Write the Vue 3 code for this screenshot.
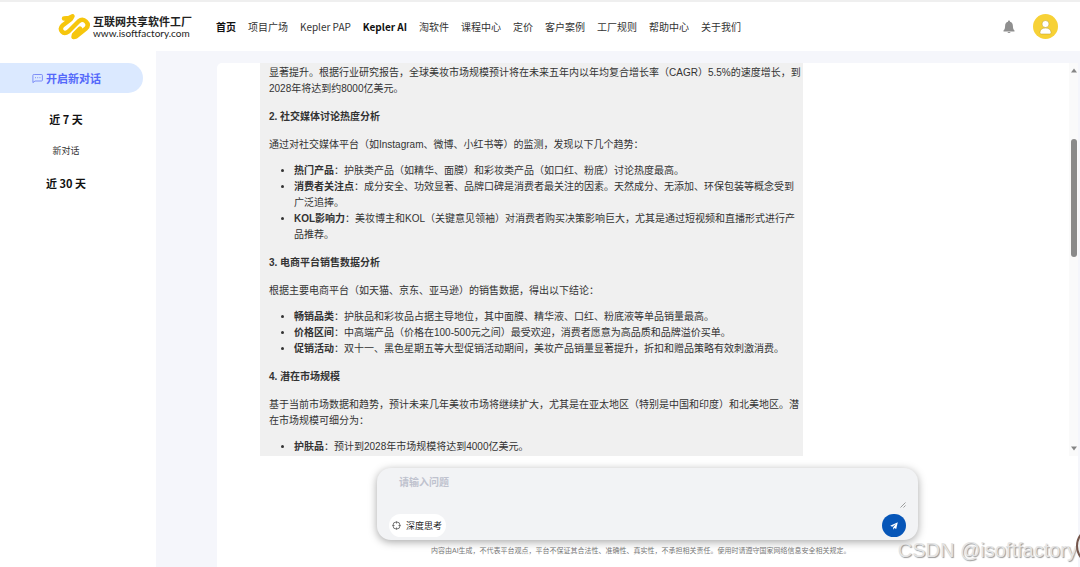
<script setup>
const nav = [
  { label: '首页', strong: true },
  { label: '项目广场' },
  { label: 'Kepler PAP' },
  { label: 'Kepler AI', strong: true },
  { label: '淘软件' },
  { label: '课程中心' },
  { label: '定价' },
  { label: '客户案例' },
  { label: '工厂规则' },
  { label: '帮助中心' },
  { label: '关于我们' },
]
const sections = [
  {
    title: '2. 社交媒体讨论热度分析',
    intro: '通过对社交媒体平台（如Instagram、微博、小红书等）的监测，发现以下几个趋势：',
    items: [
      ['热门产品', '护肤类产品（如精华、面膜）和彩妆类产品（如口红、粉底）讨论热度最高。'],
      ['消费者关注点', '成分安全、功效显著、品牌口碑是消费者最关注的因素。天然成分、无添加、环保包装等概念受到广泛追捧。'],
      ['KOL影响力', '美妆博主和KOL（关键意见领袖）对消费者购买决策影响巨大，尤其是通过短视频和直播形式进行产品推荐。'],
    ],
  },
  {
    title: '3. 电商平台销售数据分析',
    intro: '根据主要电商平台（如天猫、京东、亚马逊）的销售数据，得出以下结论：',
    items: [
      ['畅销品类', '护肤品和彩妆品占据主导地位，其中面膜、精华液、口红、粉底液等单品销量最高。'],
      ['价格区间', '中高端产品（价格在100-500元之间）最受欢迎，消费者愿意为高品质和品牌溢价买单。'],
      ['促销活动', '双十一、黑色星期五等大型促销活动期间，美妆产品销量显著提升，折扣和赠品策略有效刺激消费。'],
    ],
  },
  {
    title: '4. 潜在市场规模',
    intro: '基于当前市场数据和趋势，预计未来几年美妆市场将继续扩大，尤其是在亚太地区（特别是中国和印度）和北美地区。潜在市场规模可细分为：',
    items: [['护肤品', '预计到2028年市场规模将达到4000亿美元。']],
  },
]
</script>

<template>
  <div class="page">
    <header class="header">
      <a class="brand" href="#">
        <svg class="logo" viewBox="0 0 36 32" aria-hidden="true">
          <path d="M8 7.500L13 7L16.500 5.300L15 8L6.500 14.500Q3.500 17.500 6 20.500T12.500 20.500L22.500 10.500Q26.500 7 30 10.500T30 17.500L20 25.500L17.500 26L18 23.500L24 17.500" fill="none" stroke="#f6c60d" stroke-width="4.400" stroke-linejoin="round" stroke-linecap="round" />
        </svg>
        <span class="brand-text">
          <strong>互联网共享软件工厂</strong>
          <span>www.isoftfactory.com</span>
        </span>
      </a>
      <nav class="nav">
        <a v-for="n in nav" :key="n.label" href="#" :class="{ strong: n.strong }">{{ n.label }}</a>
      </nav>
      <div class="tools">
        <button class="bell" aria-label="通知">
          <svg viewBox="0 0 12 14"><path fill="#8f8f8f" d="M6 0.500a1 1 0 0 1 1 1.200C9 2.200 9.900 3.800 9.900 6c0 2.500.5 3.500 1.600 4.600v.9H.5v-.9C1.600 9.500 2.100 8.500 2.100 6c0-2.200.9-3.800 2.900-4.300A1 1 0 0 1 6 .5zM4.500 12h3a1.500 1 0 0 1-3 0z" /></svg>
        </button>
        <button class="avatar" aria-label="用户">
          <svg viewBox="0 0 25 25"><circle cx="12.500" cy="12.500" r="12.500" fill="#f7d136" /><path d="M8.500 20c-1.300 0-1.700-.8-1.500-2 .4-2.700 2.400-4 5.500-4s5.100 1.300 5.500 4c.2 1.200-.2 2-1.500 2z" fill="#fff" stroke="#b99a2b" stroke-width=".5" /><circle cx="12.500" cy="10" r="3.500" fill="#fff" stroke="#b99a2b" stroke-width=".5" /></svg>
        </button>
      </div>
    </header>

    <div class="body">
      <aside class="sidebar">
        <button class="new-chat">
          <svg viewBox="0 0 11 11" fill="none" stroke="#6676f5" stroke-width=".8" aria-hidden="true"><path d="M2.300 1.500h7.200q.9 0 .9.900v4.700q0 .9-.9.900H3L.9 9.600V2.400q0-.9.900-.9zM3 4.700h1M5.200 4.700h1M7.400 4.700h1" /></svg>
          开启新对话
        </button>
        <h2>近 7 天</h2>
        <a href="#">新对话</a>
        <h2>近 30 天</h2>
      </aside>

      <main class="main">
        <section class="chat">
          <div class="thread">
            <article class="message">
              <p>显著提升。根据行业研究报告，全球美妆市场规模预计将在未来五年内以年均复合增长率（CAGR）5.5%的速度增长，到2028年将达到约8000亿美元。</p>
              <template v-for="s in sections" :key="s.title">
                <h3>{{ s.title }}</h3>
                <p>{{ s.intro }}</p>
                <ul>
                  <li v-for="i in s.items" :key="i[0]"><strong>{{ i[0] }}</strong>：{{ i[1] }}</li>
                </ul>
              </template>
            </article>
          </div>
          <div class="scrollbar" aria-hidden="true">
            <svg viewBox="0 0 6 5"><path fill="#858585" d="M3 0.500L6 4.500H0z" /></svg>
            <span class="space-before"></span>
            <span class="thumb"></span>
            <span class="space-after"></span>
            <svg viewBox="0 0 6 5"><path fill="#858585" d="M3 4.500L6 0.500H0z" /></svg>
          </div>
        </section>

        <form class="composer" @submit.prevent>
          <textarea aria-label="请输入问题" placeholder="请输入问题"></textarea>
          <svg class="grip" viewBox="0 0 6 6" aria-hidden="true"><path d="M.5 5.500L5.500.5M3.500 5.500l2-2" stroke="#777" stroke-width=".7" /></svg>
          <div class="actions">
            <button type="button" class="think">
              <svg viewBox="0 0 9 9" fill="none" stroke="#555" stroke-width=".8" aria-hidden="true"><circle cx="4.500" cy="4.500" r="3.600" /><path d="M4.500.5v2M4.500 6.500v2M.5 4.500h2M6.500 4.500h2" /></svg>
              深度思考
            </button>
            <button class="send" aria-label="发送">
              <svg viewBox="0 0 8 8"><path fill="#fff" d="M7.800.3L.2 3.700l2 1L6 2 3.200 5.200v2.500l1.200-1.600 1.800.9z" /></svg>
            </button>
          </div>
        </form>
        <p class="notice">内容由AI生成，不代表平台观点，平台不保证其合法性、准确性、真实性，不承担相关责任。使用时请遵守国家网络信息安全相关规定。</p>
      </main>
    </div>
    <span class="watermark">CSDN @isoftfactory</span>
    <span class="helper" aria-hidden="true"></span>
  </div>
</template>

<style>
body { margin: 0; }
</style>

<style scoped>
.page {
  position: relative;
  display: flex;
  flex-direction: column;
  height: 100vh;
  overflow: hidden;
  background: #f5f6fb;
  color: #333;
  font: 10px/16px "Liberation Sans", "Noto Sans CJK SC", sans-serif;
}
.page * { box-sizing: border-box; }
a { color: inherit; text-decoration: none; }
button { border: 0; padding: 0; background: none; font: inherit; color: inherit; display: flex; align-items: center; justify-content: center; }
svg { display: block; flex: none; }
h2, h3, p, ul { margin: 0; }
.header {
  flex: none;
  display: flex;
  align-items: center;
  height: 51px;
  padding: 0 22px 0 56px;
  background: #fff;
  border-top: 2px solid #efefef;
  font-family: "Noto Sans CJK SC", sans-serif;
}
.brand { display: flex; align-items: center; width: 160px; color: #222; }
.logo { width: 36px; height: 32px; }
.brand-text { display: flex; flex-direction: column; padding-left: 1px; font: 10px/11px Lato, sans-serif; }
.brand-text strong { font: 700 11px/13px "Noto Sans CJK SC", sans-serif; white-space: nowrap; }
.nav { display: flex; gap: 12px; white-space: nowrap; }
.nav .strong { font-weight: 700; color: #111; }
.tools { display: flex; align-items: center; gap: 18px; margin-left: auto; }
.bell svg { width: 12px; height: 14px; }
.avatar svg { width: 25px; height: 25px; }
.body { flex: 1; display: flex; min-height: 0; }
.sidebar {
  flex: none;
  display: flex;
  flex-direction: column;
  align-items: center;
  width: 156px;
  padding: 12px 24px 0 0;
  background: #fff;
  font-family: "Noto Sans CJK SC", sans-serif;
}
.new-chat {
  align-self: stretch;
  height: 30px;
  margin: 0 -11px 18px 0;
  padding-right: 10px;
  gap: 3px;
  border-radius: 0 15px 15px 0;
  background: #dbe9ff;
  color: #5468fa;
  font-size: 11px;
  font-weight: 700;
}
.new-chat svg { width: 11px; height: 11px; }
.sidebar h2 { color: #111; font-size: 11px; line-height: 16px; font-weight: 700; }
.sidebar a { margin: 16px 0; font-size: 9px; }
.main {
  flex: 1;
  display: flex;
  flex-direction: column;
  min-width: 0;
  margin: 12px 2px 0 61px;
  padding-bottom: 10px;
  background: #fff;
  border-radius: 5px 5px 0 0;
}
.chat { flex: 1; display: flex; min-height: 0; }
.thread { flex: 1; min-width: 0; padding-left: 43px; overflow: hidden; }
.message { max-width: 543px; padding: 2px 0 20px 9px; background: #f0f0f0; }
.message h3 { margin: 12px 0; font-size: 10px; line-height: 16px; font-weight: 700; }
.message ul { margin: 10px 0 0; padding-left: 25px; }
.scrollbar { flex: none; display: flex; flex-direction: column; align-items: center; width: 9px; padding: 5px 0; background: #fafafa; }
.scrollbar svg { width: 6px; height: 5px; }
.space-before { flex: 66; }
.thumb { flex: 118; width: 6px; border-radius: 3px; background: #8a8a8a; }
.space-after { flex: 188; }
.composer {
  position: relative;
  flex: none;
  width: 541px;
  max-width: 75%;
  margin: 12px auto 0 160px;
  padding: 5px 12px 3px;
  border-radius: 14px;
  background: #f2f3f5;
  box-shadow: 0 2px 8px rgba(0, 0, 0, 0.35);
}
textarea { display: block; width: 100%; height: 41px; padding: 2px 10px; border: 0; background: none; resize: none; outline: 0; font: inherit; }
textarea::placeholder { color: #bfc2ce; opacity: 1; font-weight: 700; }
.grip { position: absolute; right: 12px; top: 34px; width: 6px; height: 6px; }
.actions { display: flex; justify-content: space-between; }
.think { height: 23px; padding: 0 4px 0 3px; gap: 5px; border-radius: 12px; background: #fff; font-size: 9px; color: #222; }
.think svg { width: 9px; height: 9px; }
.send { width: 24px; height: 23px; border-radius: 12px; background: #0756b8; }
.send svg { width: 8px; height: 8px; }
.notice { flex: none; margin: 5px 0 0 214px; font-size: 7px; line-height: 12px; color: #777; }
.watermark { position: absolute; right: 3px; bottom: 5px; font-size: 20px; line-height: 24px; color: #e4e4e4; text-shadow: 1px 1px 1px #999; }
.helper { position: absolute; right: -36px; bottom: 1px; width: 40px; height: 40px; border: 2px solid #75564c; border-radius: 50%; background: #eee; }
</style>
